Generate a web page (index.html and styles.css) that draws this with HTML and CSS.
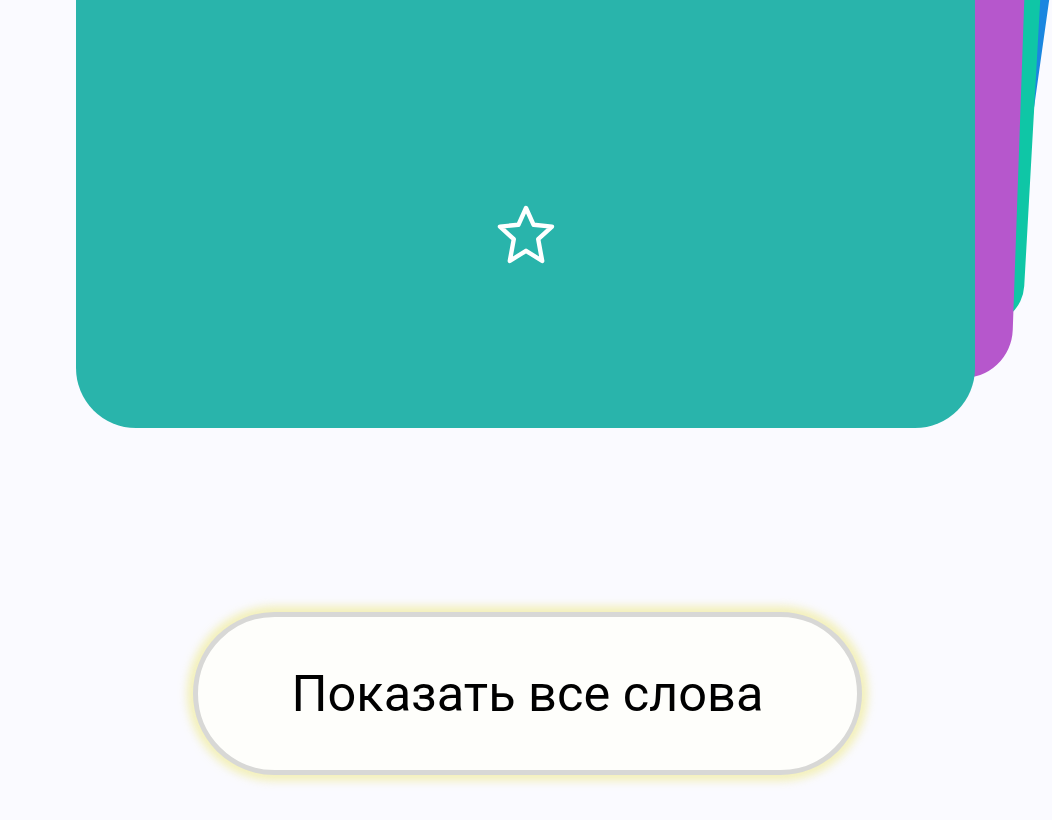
FILE: index.html
```html
<!DOCTYPE html>
<html lang="ru">
<head>
<meta charset="utf-8">
<title>Карточки</title>
<link rel="stylesheet" href="styles.css">
</head>
<body>
<main class="page">
  <section class="stack">
    <div class="card-back card-blue"></div>
    <div class="card-back card-green"></div>
    <div class="card-back card-purple"></div>
    <div class="card-front">
      <svg class="star" width="64" height="62" viewBox="0 0 64 62" aria-hidden="true">
        <polygon points="32,4 39.6,20.8 58,22.6 44.2,35.2 48.2,57 32,46.8 15.8,57 19.8,35.2 6,22.6 24.4,20.8" fill="none" stroke="#ffffff" stroke-width="4.4" stroke-linejoin="round"/>
      </svg>
    </div>
  </section>
  <div class="actions">
    <button class="show-all">Показать все слова</button>
  </div>
</main>
</body>
</html>
```
FILE: styles.css
```css
html, body {
  margin: 0;
  padding: 0;
  overflow: hidden;
  background: #fafaff;
  font-family: Roboto, "Liberation Sans", sans-serif;
}

.page {
  width: 1052px;
  height: 820px;
  display: flex;
  flex-direction: column;
}

.stack {
  position: relative;
  height: 428px;
}

.card-back {
  position: absolute;
  width: 899px;
  border-radius: 50px;
  transform-origin: right bottom;
}

.card-blue {
  left: 108px;
  top: -400px;
  height: 700px;
  background: #1a86e0;
  transform: rotate(8deg);
}

.card-green {
  left: 123px;
  top: -300px;
  height: 626px;
  background: #0fc6a6;
  border-radius: 40px;
  transform: rotate(3.2deg);
}

.card-purple {
  left: 112px;
  top: -300px;
  height: 680px;
  background: #b657cc;
  transform: rotate(2deg);
}

.card-front {
  position: relative;
  margin-left: 76px;
  width: 899px;
  height: 428px;
  box-sizing: border-box;
  padding-top: 42px;
  background: #29b4ab;
  border-radius: 0 0 60px 60px;
  display: flex;
  align-items: center;
  justify-content: center;
}

.star {
  display: block;
}

.actions {
  display: flex;
  justify-content: center;
  padding-top: 184px;
  padding-left: 3px;
}

.show-all {
  width: 669px;
  height: 163px;
  box-sizing: border-box;
  border: 5px solid #d8d8d6;
  border-radius: 82px;
  background: #fefefb;
  box-shadow: 0 0 9px 6px rgba(238, 234, 140, 0.6);
  font-family: Roboto, "Liberation Sans", sans-serif;
  font-size: 50.5px;
  font-weight: 400;
  color: #000000;
  padding: 0;
  cursor: pointer;
}
```
